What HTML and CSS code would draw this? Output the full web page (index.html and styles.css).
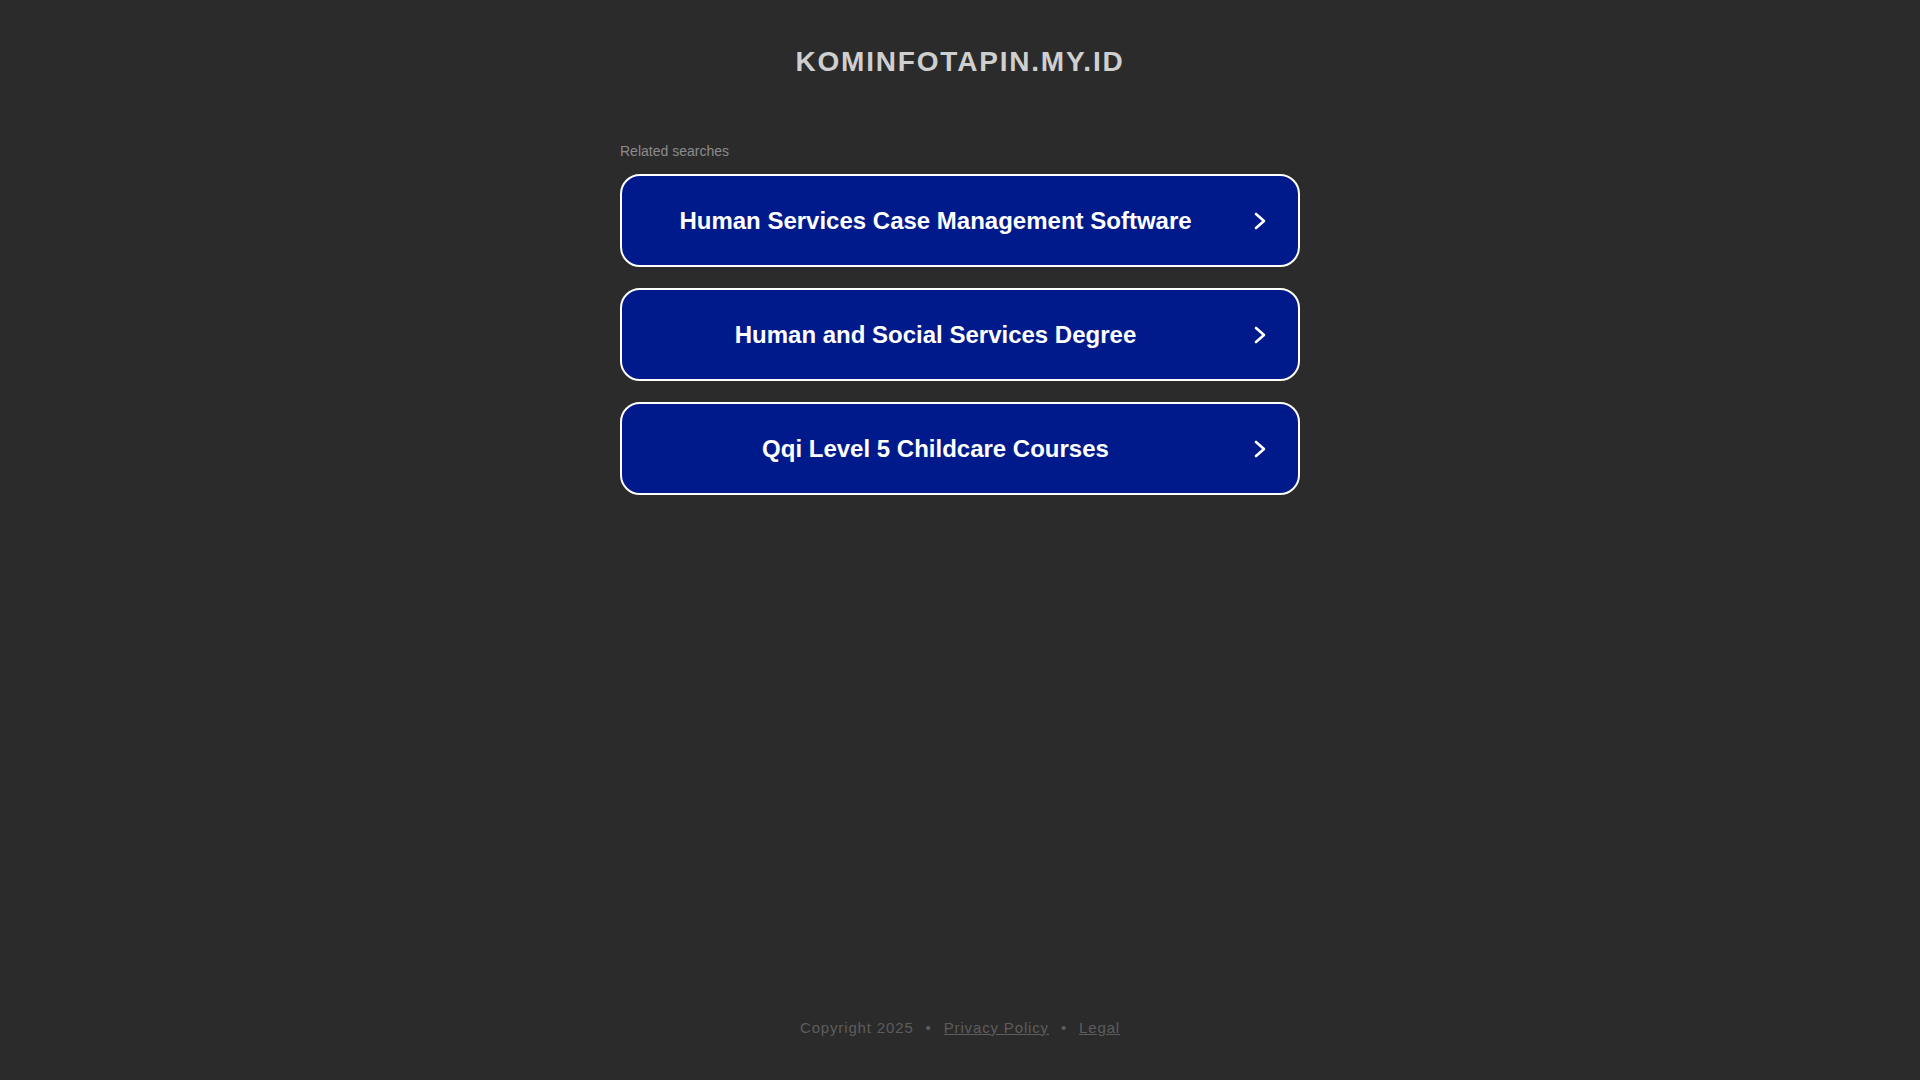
FILE: index.html
```html
<!DOCTYPE html>
<html lang="en">
<head>
<meta charset="utf-8">
<title>kominfotapin.my.id</title>
<link rel="stylesheet" href="styles.css">
</head>
<body>
<div class="page">
  <header class="header">
    <h1 class="domain">KOMINFOTAPIN.MY.ID</h1>
  </header>
  <main class="content">
    <div class="related">Related searches</div>
    <ul class="list">
      <li><a class="item" href="#"><span class="label">Human Services Case Management Software</span><svg class="chev" viewBox="0 0 12 18" width="12" height="18"><polyline points="2,2 10,9 2,16" fill="none" stroke="#fff" stroke-width="2.6" stroke-linecap="round" stroke-linejoin="round"/></svg></a></li>
      <li><a class="item" href="#"><span class="label">Human and Social Services Degree</span><svg class="chev" viewBox="0 0 12 18" width="12" height="18"><polyline points="2,2 10,9 2,16" fill="none" stroke="#fff" stroke-width="2.6" stroke-linecap="round" stroke-linejoin="round"/></svg></a></li>
      <li><a class="item" href="#"><span class="label">Qqi Level 5 Childcare Courses</span><svg class="chev" viewBox="0 0 12 18" width="12" height="18"><polyline points="2,2 10,9 2,16" fill="none" stroke="#fff" stroke-width="2.6" stroke-linecap="round" stroke-linejoin="round"/></svg></a></li>
    </ul>
  </main>
  <footer class="footer">
    <span>Copyright 2025</span><span class="dot">•</span><a href="#">Privacy Policy</a><span class="dot">•</span><a href="#">Legal</a>
  </footer>
</div>
</body>
</html>
```
FILE: styles.css
```css
html, body {
  margin: 0;
  padding: 0;
  height: 100%;
}
body {
  background: #2b2b2b;
  font-family: Arial, "Liberation Sans", sans-serif;
}
.page {
  height: 1080px;
  display: flex;
  flex-direction: column;
  align-items: center;
}
.header {
  padding-top: 44px;
}
.domain {
  margin: 0;
  font-size: 28px;
  line-height: 36px;
  font-weight: bold;
  letter-spacing: 1.8px;
  color: #cfcfcf;
  text-align: center;
}
.content {
  width: 680px;
  margin-top: 62px;
}
.related {
  font-size: 14px;
  line-height: 18px;
  color: #8c8c8c;
  margin-bottom: 14px;
}
.list {
  list-style: none;
  margin: 0;
  padding: 0;
  display: flex;
  flex-direction: column;
  gap: 21px;
}
.item {
  box-sizing: border-box;
  height: 93px;
  display: flex;
  align-items: center;
  padding: 1px 32px 0 31px;
  background: #011a8b;
  border: 2px solid #ffffff;
  border-radius: 20px;
  text-decoration: none;
}
.label {
  flex: 1;
  text-align: center;
  color: #ffffff;
  font-size: 24px;
  font-weight: bold;
}
.chev {
  margin-left: 36px;
  flex: none;
}
.footer {
  margin-top: auto;
  padding-bottom: 44px;
  font-size: 15px;
  letter-spacing: 0.85px;
  color: #5d5d5d;
}
.footer a {
  color: #5d5d5d;
}
.dot {
  margin: 0 12px;
}
```
